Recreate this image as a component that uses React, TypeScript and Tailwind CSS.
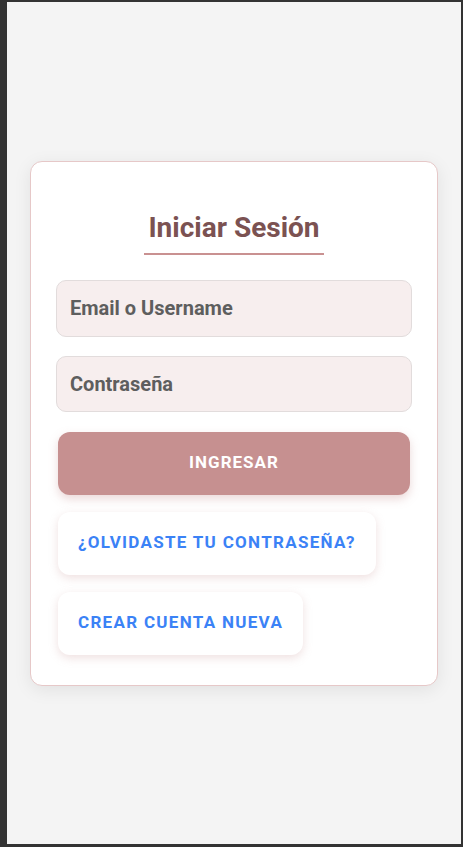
import React from 'react';

const App: React.FC = () => {
  return (
    <div className="h-[847px] w-full bg-[#333333] pl-[7px] pr-[2px] pt-[2px] pb-[3px] font-['Roboto',sans-serif]">
      <div className="h-full bg-[#f4f4f4] flex items-center justify-center px-[23px]">
        {/* Login card */}
        <div className="w-full bg-white border border-[#e6c8c8] rounded-xl shadow-[0_4px_18px_rgba(0,0,0,0.08)] px-[25px] pt-[50px] pb-[30px] flex flex-col">
          <div className="flex justify-center">
            <h1 className="text-[28px] leading-[32px] font-bold text-[#7b5252] px-[4px] pb-[9px] border-b-2 border-[#c99191]">
              Iniciar Sesión
            </h1>
          </div>

          <input
            type="text"
            placeholder="Email o Username"
            className="mt-[25px] h-[57px] w-full rounded-[10px] border border-[#e2dcdc] bg-[#f7eeee] px-[13px] text-[20px] font-bold text-[#5e5e5e] placeholder:text-[#5e5e5e] outline-none"
          />
          <input
            type="password"
            placeholder="Contraseña"
            className="mt-[19px] h-[56px] w-full rounded-[10px] border border-[#e2dcdc] bg-[#f7eeee] px-[13px] text-[20px] font-bold text-[#5e5e5e] placeholder:text-[#5e5e5e] outline-none"
          />

          <button
            type="button"
            className="mt-[20px] mx-[2px] h-[63px] rounded-xl bg-[#c69090] text-white text-[17px] font-bold tracking-[1px] shadow-[0_4px_10px_rgba(198,144,144,0.35)]"
          >
            INGRESAR
          </button>

          <div className="mt-[17px] mx-[2px] flex flex-col items-start gap-[17px]">
            <button
              type="button"
              className="h-[63px] px-5 rounded-xl bg-white text-[#3b82f6] text-[17px] font-bold tracking-[1.3px] shadow-[0_3px_10px_rgba(198,144,144,0.28)]"
            >
              ¿OLVIDASTE TU CONTRASEÑA?
            </button>
            <button
              type="button"
              className="h-[63px] px-5 rounded-xl bg-white text-[#3b82f6] text-[17px] font-bold tracking-[1.3px] shadow-[0_3px_10px_rgba(198,144,144,0.28)]"
            >
              CREAR CUENTA NUEVA
            </button>
          </div>
        </div>
      </div>
    </div>
  );
};

export default App;
